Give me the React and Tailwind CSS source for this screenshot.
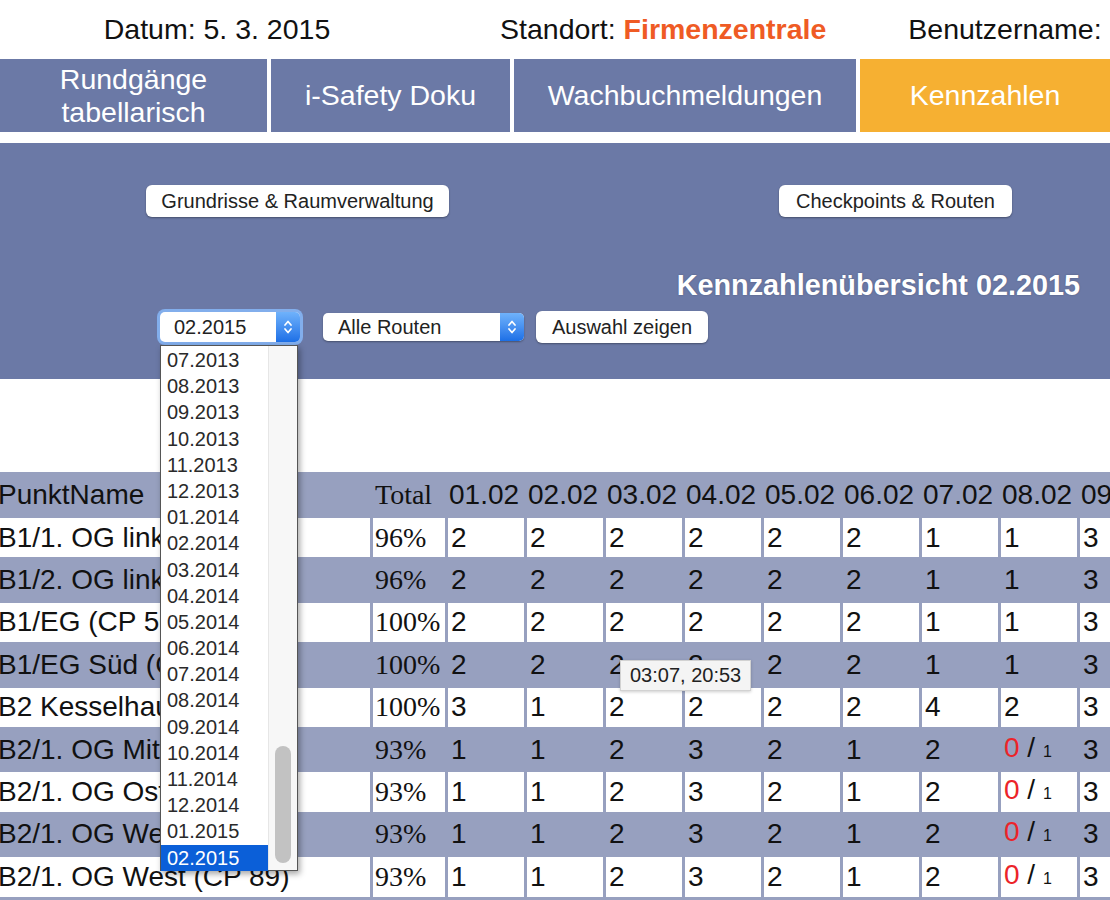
import React from 'react';

const days = ['01.02', '02.02', '03.02', '04.02', '05.02', '06.02', '07.02', '08.02', '09.02', '10.02'];

const rows = [
  { name: 'B1/1. OG links (CP 51)', total: '96%', v: [2, 2, 2, 2, 2, 2, 1, 1, 3, 2] },
  { name: 'B1/2. OG links (CP 53)', total: '96%', v: [2, 2, 2, 2, 2, 2, 1, 1, 3, 2] },
  { name: 'B1/EG (CP 50)', total: '100%', v: [2, 2, 2, 2, 2, 2, 1, 1, 3, 2] },
  { name: 'B1/EG Süd (CP 52)', total: '100%', v: [2, 2, 2, 2, 2, 2, 1, 1, 3, 2] },
  { name: 'B2 Kesselhaus', total: '100%', v: [3, 1, 2, 2, 2, 2, 4, 2, 3, 2] },
  { name: 'B2/1. OG Mitte', total: '93%', v: [1, 1, 2, 3, 2, 1, 2, 'x', 3, 2] },
  { name: 'B2/1. OG Ost (CP 87)', total: '93%', v: [1, 1, 2, 3, 2, 1, 2, 'x', 3, 2] },
  { name: 'B2/1. OG West (CP 88)', total: '93%', v: [1, 1, 2, 3, 2, 1, 2, 'x', 3, 2] },
  { name: 'B2/1. OG West (CP 89)', total: '93%', v: [1, 1, 2, 3, 2, 1, 2, 'x', 3, 2] },
];

const months = [
  '07.2013', '08.2013', '09.2013', '10.2013', '11.2013', '12.2013',
  '01.2014', '02.2014', '03.2014', '04.2014', '05.2014', '06.2014',
  '07.2014', '08.2014', '09.2014', '10.2014', '11.2014', '12.2014',
  '01.2015', '02.2015',
];

function Stepper() {
  return (
    <div className="w-[24px] h-full rounded-r-[5px] bg-gradient-to-b from-[#6fb2fb] to-[#1c6fe6] flex items-center justify-center">
      <svg width="10" height="18" viewBox="0 0 10 18">
        <path d="M2 7l3-3.5 3 3.5M2 11l3 3.5 3-3.5" stroke="white" strokeWidth="1.7" fill="none" strokeLinecap="round" strokeLinejoin="round" />
      </svg>
    </div>
  );
}

function Cell({ value }) {
  if (value === 'x') {
    return (
      <span>
        <span className="text-[#ec2429]">0</span>
        <span> / </span>
        <span className="text-[16px]">1</span>
      </span>
    );
  }
  return <span>{value}</span>;
}

export default function App() {
  return (
    <div className="relative w-[1110px] h-[900px] overflow-hidden bg-white font-['Liberation_Sans',Arial,sans-serif] text-[#111]">
      {/* top info line */}
      <div className="h-[59px] flex items-center text-[28.5px]">
        <div className="w-[434px] text-center">Datum: 5. 3. 2015</div>
        <div className="ml-[66px] whitespace-nowrap">
          Standort: <span className="font-bold text-[#ef5b24]">Firmenzentrale</span>
        </div>
        <div className="ml-[82px] whitespace-nowrap">Benutzername:</div>
      </div>

      {/* tabs */}
      <div className="h-[73px] flex gap-[4px] bg-white text-white text-[28.5px]">
        <div className="w-[267px] shrink-0 bg-[#6b79a6] flex items-center justify-center text-center leading-[33px]">
          Rundgänge<br />tabellarisch
        </div>
        <div className="w-[239px] shrink-0 bg-[#6b79a6] flex items-center justify-center">i-Safety Doku</div>
        <div className="w-[342px] shrink-0 bg-[#6b79a6] flex items-center justify-center">Wachbuchmeldungen</div>
        <div className="w-[250px] shrink-0 bg-[#f6b032] flex items-center justify-center">Kennzahlen</div>
      </div>

      <div className="h-[11px]" />

      {/* control panel */}
      <div className="h-[236px] bg-[#6b79a6] pt-[42px]">
        <div className="flex">
          <button className="ml-[146px] w-[303px] h-[32px] rounded-[6px] bg-white text-[20px] text-[#222] shadow-[0_1px_2px_rgba(0,0,0,0.35)]">
            Grundrisse &amp; Raumverwaltung
          </button>
          <button className="ml-[330px] w-[233px] h-[32px] rounded-[6px] bg-white text-[20px] text-[#222] shadow-[0_1px_2px_rgba(0,0,0,0.35)]">
            Checkpoints &amp; Routen
          </button>
        </div>
        <div className="mt-[52px] pr-[30px] text-right text-white font-bold text-[28.8px] leading-[32px] [text-shadow:0_0_2px_rgba(0,0,0,0.25)]">
          Kennzahlenübersicht 02.2015
        </div>
        <div className="mt-[10px] flex items-center">
          <div className="ml-[160px] w-[140px] h-[30px] flex rounded-[5px] bg-white ring-[3px] ring-[#82aeec]">
            <div className="flex-1 pl-[14px] text-[20px] leading-[30px] text-[#222]">02.2015</div>
            <Stepper />
          </div>
          <div className="ml-[23px] w-[201px] h-[28px] flex rounded-[5px] bg-white shadow-[0_1px_2px_rgba(0,0,0,0.35)]">
            <div className="flex-1 pl-[15px] text-[20px] leading-[28px] text-[#222]">Alle Routen</div>
            <Stepper />
          </div>
          <button className="ml-[12px] w-[172px] h-[32px] rounded-[6px] bg-white text-[20px] text-[#222] shadow-[0_1px_2px_rgba(0,0,0,0.35)]">
            Auswahl zeigen
          </button>
        </div>
      </div>

      <div className="h-[93px]" />

      {/* statistics table */}
      <table className="table-fixed w-[1244px] -ml-[6px] border-separate border-spacing-[3px] bg-[#97a0bf] text-[28px] leading-[30px] whitespace-nowrap">
        <colgroup>
          <col className="w-[373px]" />
          <col className="w-[72px]" />
          {days.map((d) => (
            <col key={d} className="w-[76px]" />
          ))}
        </colgroup>
        <thead>
          <tr className="h-[40px]">
            <th className="px-[1px] text-left font-normal overflow-hidden">PunktName</th>
            <th className="px-[2px] text-left font-normal font-['Liberation_Serif',serif]">Total</th>
            {days.map((d) => (
              <th key={d} className="px-[1px] text-left font-normal overflow-hidden">{d}</th>
            ))}
          </tr>
        </thead>
        <tbody>
          {rows.map((r, i) => {
            const bg = i % 2 === 0 ? 'bg-white' : '';
            return (
              <tr key={i} className="h-[39.4px]">
                <td className={`${bg} px-[1px] overflow-hidden`}>{r.name}</td>
                <td className={`${bg} px-[2px] font-['Liberation_Serif',serif]`}>{r.total}</td>
                {r.v.map((v, j) => (
                  <td key={j} className={`${bg} px-[3px]`}>
                    <Cell value={v} />
                  </td>
                ))}
              </tr>
            );
          })}
        </tbody>
      </table>

      {/* open month dropdown */}
      <div className="absolute left-[160px] top-[345px] w-[138px] h-[526px] bg-white border border-[#555] shadow-[2px_3px_6px_rgba(0,0,0,0.35)] flex">
        <div className="w-[107px] pt-[1px]">
          {months.map((m) => (
            <div
              key={m}
              className={`h-[26.2px] pl-[6px] text-[20px] leading-[26px] ${m === '02.2015' ? 'bg-[#0b5fd8] text-white' : 'text-[#2a2a2a]'}`}
            >
              {m}
            </div>
          ))}
        </div>
        <div className="flex-1 bg-[#f7f7f7] border-l border-[#e6e6e6] flex flex-col justify-end items-center pb-[7px]">
          <div className="w-[16px] h-[117px] rounded-full bg-[#c2c2c2]" />
        </div>
      </div>

      {/* hover tooltip */}
      <div className="absolute left-[620px] top-[660px] h-[31px] px-[9px] bg-[#f4f4f4] border border-[#d2d2d2] shadow-[0_1px_3px_rgba(0,0,0,0.2)] text-[20px] leading-[29px] text-[#222]">
        03:07, 20:53
      </div>
    </div>
  );
}
